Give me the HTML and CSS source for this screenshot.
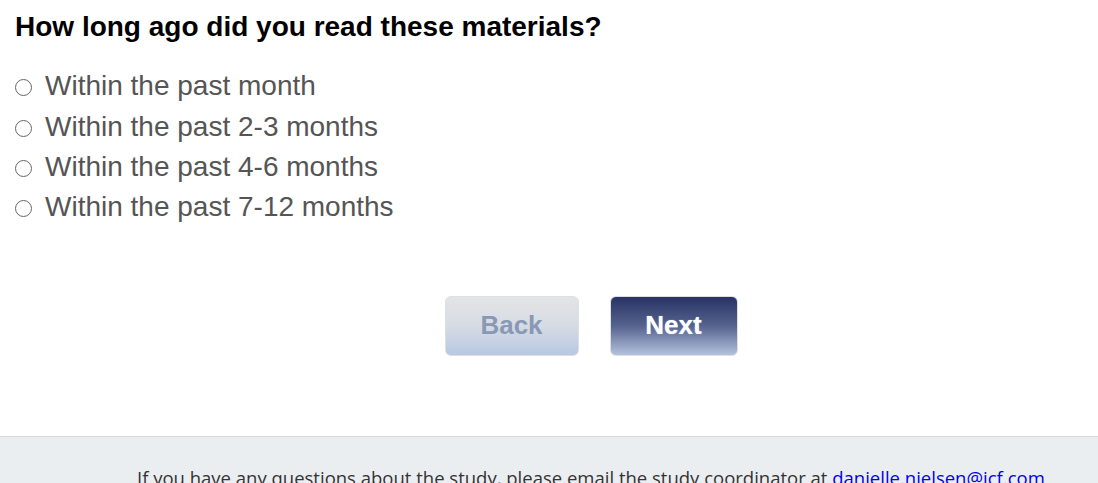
FILE: index.html
```html
<!DOCTYPE html>
<html>
<head>
<meta charset="utf-8">
<link rel="stylesheet" href="styles.css">
</head>
<body>
<div class="page">
  <h1 class="question">How long ago did you read these materials?</h1>
  <div class="options">
    <label class="option"><span class="radio"></span><span>Within the past month</span></label>
    <label class="option"><span class="radio"></span><span>Within the past 2-3 months</span></label>
    <label class="option"><span class="radio"></span><span>Within the past 4-6 months</span></label>
    <label class="option"><span class="radio"></span><span>Within the past 7-12 months</span></label>
  </div>
  <div class="nav">
    <button class="btn btn-back">Back</button>
    <button class="btn btn-next">Next</button>
  </div>
</div>
<footer class="footer">
  <p>If you have any questions about the study, please email the study coordinator at <a href="#">danielle.nielsen@icf.com</a></p>
</footer>
</body>
</html>
```
FILE: styles.css
```css
html, body {
  margin: 0;
  padding: 0;
  background: #fff;
}
.page {
  padding: 10px 15px 0 15px;
  height: 436px;
  box-sizing: border-box;
}
.question {
  margin: 0;
  font-family: "Liberation Sans", Arial, sans-serif;
  font-weight: bold;
  font-size: 28px;
  line-height: 34px;
  color: #000;
}
.options {
  margin-top: 22px;
  display: flex;
  flex-direction: column;
}
.option {
  display: flex;
  align-items: center;
  gap: 13px;
  height: 40.4px;
  font-family: "Liberation Sans", Arial, sans-serif;
  font-size: 28px;
  color: #555;
}
.radio {
  width: 15px;
  height: 15px;
  border: 1.5px solid #666;
  border-radius: 50%;
  margin-left: 0;
  margin-top: 3px;
}
.nav {
  margin-top: 68px;
  display: flex;
  justify-content: center;
  gap: 31px;
  padding-left: 84px;
}
.btn {
  height: 60px;
  border-radius: 6px;
  font-family: "Liberation Sans", Arial, sans-serif;
  font-weight: bold;
  font-size: 26px;
  border: 1px solid #dcdfe4;
  padding: 0;
}
.btn-back {
  width: 134px;
  color: #8898b5;
  background: linear-gradient(to bottom, #e4e4e6 0%, #d6dbe4 50%, #b7c8e2 100%);
}
.btn-next {
  width: 128px;
  color: #fff;
  background: linear-gradient(to bottom, #283363 0%, #55638f 50%, #b3c2dd 100%);
  text-shadow: 0 0 1px #b0c8ff;
}
.footer {
  background: #ebeef1;
  border-top: 1px solid #d7dadd;
  height: 47px;
  overflow: hidden;
}
.footer p {
  margin: 0;
  padding-top: 28px;
  padding-left: 137px;
  font-family: "Open Sans", "Noto Sans", sans-serif;
  font-size: 18.5px;
  line-height: 26px;
  color: #333;
  white-space: nowrap;
}
.footer a {
  color: #0000ee;
  text-decoration: none;
}
```
